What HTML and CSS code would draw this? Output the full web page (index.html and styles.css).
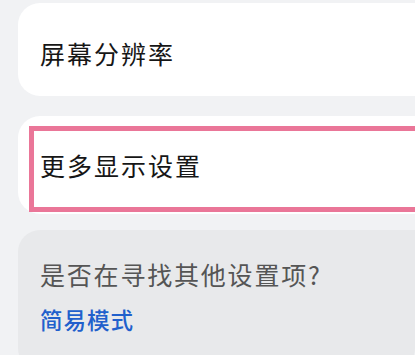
FILE: index.html
```html
<!DOCTYPE html>
<html lang="zh-CN">
<head>
<meta charset="utf-8">
<link rel="stylesheet" href="styles.css">
</head>
<body>
<div class="page">
  <div class="card item">
    <span class="title">屏幕分辨率</span>
  </div>
  <div class="card item highlighted">
    <span class="title">更多显示设置</span>
    <div class="focus-ring"></div>
  </div>
  <div class="card hint">
    <div class="hint-text">是否在寻找其他设置项?</div>
    <div class="hint-link">简易模式</div>
  </div>
</div>
</body>
</html>
```

FILE: styles.css
```css
html, body {
  margin: 0;
  padding: 0;
  background: #f1f2f4;
  overflow: hidden;
  width: 415px;
  height: 355px;
}
.page {
  display: flex;
  flex-direction: column;
  padding: 3px 0 0 18px;
  font-family: "Noto Sans CJK SC", "Noto Sans", sans-serif;
  overflow: hidden;
}
.card {
  width: 397px;
  margin-right: -20px;
  border-radius: 22px;
  box-sizing: border-box;
}
.item {
  background: #ffffff;
  display: flex;
  align-items: center;
  padding-left: 22px;
  position: relative;
}
.item:first-child {
  height: 93px;
  padding-top: 6px;
  border-top-right-radius: 0;
  border-bottom-right-radius: 0;
}
.highlighted {
  margin-top: 20px;
  height: 98px;
  border-top-right-radius: 0;
  border-bottom-right-radius: 0;
}
.title {
  font-size: 25px;
  letter-spacing: 2px;
  color: #161616;
}
.focus-ring {
  position: absolute;
  left: 11px;
  top: 10px;
  right: -5px;
  bottom: 2px;
  border: 5px solid #ea7698;
}
.hint {
  margin-top: 16px;
  background: #e8e9eb;
  padding: 26px 22px 30px;
  height: 140px;
  border-top-right-radius: 0;
}
.hint-text {
  font-size: 25px;
  letter-spacing: 1.8px;
  color: #555555;
}
.hint-link {
  margin-top: 11px;
  font-size: 22.5px;
  letter-spacing: 1px;
  color: #2160cc;
  font-weight: 500;
}
```
